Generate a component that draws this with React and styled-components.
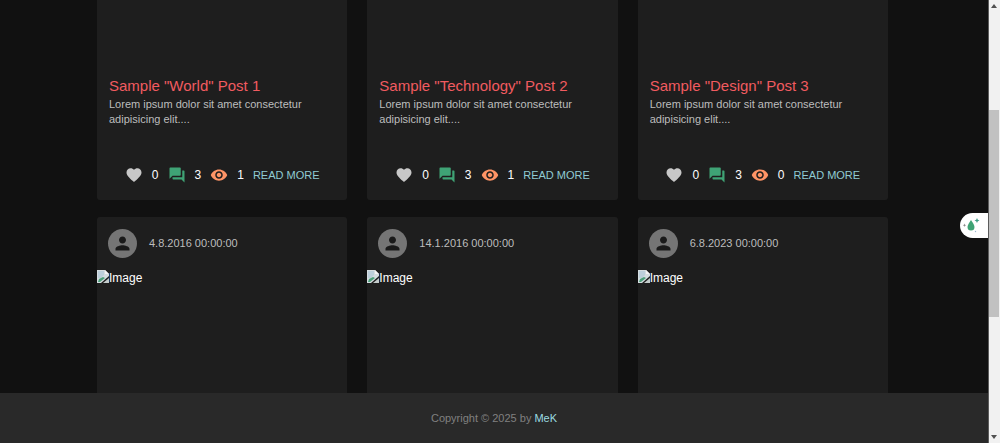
import React from "react";
import styled, { createGlobalStyle } from "styled-components";

const GlobalStyle = createGlobalStyle`
  *, *::before, *::after { box-sizing: border-box; }
  body {
    margin: 0;
    background: #111111;
    color: #ffffff;
    font-family: "Liberation Sans", Arial, sans-serif;
    font-size: 12px;
  }
  h2, p { margin: 0; font-weight: 400; }
`;

const Shell = styled.div`
  display: flex;
  min-height: 100vh;
`;

const Page = styled.div`
  flex: 1;
  min-width: 0;
  display: flex;
  flex-direction: column;
`;

const Posts = styled.main`
  flex: 1;
  display: grid;
  grid-template-columns: repeat(3, minmax(0, 1fr));
  grid-template-rows: auto 1fr;
  gap: 17px 20px;
  padding: 0 100px 0 97px;
`;

const Card = styled.article`
  display: flex;
  flex-direction: column;
  background: #1e1e1e;
  border-radius: ${(p) => (p.$open === "top" ? "0 0 3px 3px" : "3px 3px 0 0")};
`;

const Media = styled.div`
  height: ${(p) => p.$height}px;
`;

const CardBody = styled.div`
  padding: 0 12px;
  min-height: 75px;
`;

const Title = styled.h2`
  font-size: 15px;
  line-height: 22px;
  color: #f15b60;
`;

const Excerpt = styled.p`
  font-size: 11px;
  line-height: 15px;
  color: #bdbdbd;
`;

const Actions = styled.div`
  display: flex;
  align-items: center;
  justify-content: center;
  gap: 9px;
  height: 50px;
`;

const IconButton = styled.button`
  display: flex;
  padding: 0;
  border: 0;
  background: none;
  color: ${(p) => p.$color};
  cursor: pointer;
`;

const Icon = styled.svg`
  display: block;
  width: ${(p) => p.$size}px;
  height: ${(p) => p.$size}px;
  fill: currentColor;
`;

const ReadMore = styled.a`
  font-size: 11px;
  color: #90cbd3;
  text-decoration: none;
`;

const CardHeader = styled.header`
  display: flex;
  align-items: center;
  gap: 12px;
  height: 52px;
  padding: 0 11px;
`;

const Avatar = styled.span`
  display: flex;
  align-items: center;
  justify-content: center;
  width: 29px;
  height: 29px;
  border-radius: 50%;
  background: #757575;
  color: #1a1a1a;
`;

const PostDate = styled.time`
  font-size: 11px;
  color: #bdbdbd;
`;

const MissingImage = styled.div`
  display: flex;
  align-items: flex-start;
  height: ${(p) => p.$height}px;
  line-height: 18px;
`;

const BrokenIcon = styled.svg`
  display: block;
  width: 12px;
  height: 16px;
`;

const Footer = styled.footer`
  display: flex;
  align-items: center;
  justify-content: center;
  height: 50px;
  background: #292929;
  color: #808080;
  font-size: 11px;
`;

const FooterLink = styled.a`
  color: #9adbe0;
  text-decoration: none;
`;

const ScrollBar = styled.div`
  position: sticky;
  top: 0;
  display: flex;
  flex-direction: column;
  align-items: center;
  width: 12px;
  height: 100vh;
  background: #f1f1f1;
  border-left: 1px solid #5c5c5c;
`;

const ScrollArrow = styled.svg`
  display: block;
  flex: none;
  width: 11px;
  height: 12px;
  fill: #505050;
`;

const ScrollTrack = styled.div`
  flex: 1;
  width: 100%;
  display: grid;
  grid-template-rows: 98fr 207fr 114fr;
`;

const ScrollThumb = styled.div`
  grid-row: 2;
  margin-right: 1px;
  background: #c1c1c1;
`;

const DropletTab = styled.button`
  position: fixed;
  top: 213px;
  right: 12px;
  width: 28px;
  height: 25px;
  padding: 0;
  border: 0;
  border-radius: 13px 0 0 13px;
  background: #ffffff;
  cursor: pointer;
`;

const DropletArt = styled.svg`
  display: block;
  width: 28px;
  height: 25px;
`;

const paths = {
  heart:
    "m12 21.35-1.45-1.32C5.4 15.36 2 12.28 2 8.5 2 5.42 4.42 3 7.5 3c1.74 0 3.41.81 4.5 2.09C13.09 3.81 14.76 3 16.5 3 19.58 3 22 5.42 22 8.5c0 3.78-3.4 6.86-8.55 11.54L12 21.35z",
  forum:
    "M21 6h-2v9H6v2c0 .55.45 1 1 1h11l4 4V7c0-.55-.45-1-1-1zm-4 6V3c0-.55-.45-1-1-1H3c-.55 0-1 .45-1 1v14l4-4h10c.55 0 1-.45 1-1z",
  eye: "M12 4.5C7 4.5 2.73 7.61 1 12c1.73 4.39 6 7.5 11 7.5s9.27-3.11 11-7.5c-1.73-4.39-6-7.5-11-7.5zM12 17c-2.76 0-5-2.24-5-5s2.24-5 5-5 5 2.24 5 5-2.24 5-5 5zm0-8c-1.66 0-3 1.34-3 3s1.34 3 3 3 3-1.34 3-3-1.34-3-3-3z",
  person:
    "M12 12c2.21 0 4-1.79 4-4s-1.79-4-4-4-4 1.79-4 4 1.79 4 4 4zm0 2c-2.67 0-8 1.34-8 4v2h16v-2c0-2.66-5.33-4-8-4z",
};

function Glyph({ name, size = 18 }) {
  return (
    <Icon $size={size} viewBox="0 0 24 24" aria-hidden="true">
      <path d={paths[name]} />
    </Icon>
  );
}

const posts = [
  { title: 'Sample "World" Post 1', likes: 0, comments: 3, views: 1 },
  { title: 'Sample "Technology" Post 2', likes: 0, comments: 3, views: 1 },
  { title: 'Sample "Design" Post 3', likes: 0, comments: 3, views: 0 },
];

const dates = ["4.8.2016 00:00:00", "14.1.2016 00:00:00", "6.8.2023 00:00:00"];

function PostCard({ post }) {
  return (
    <Card $open="top">
      <Media $height={75} />
      <CardBody>
        <Title>{post.title}</Title>
        <Excerpt>Lorem ipsum dolor sit amet consectetur adipisicing elit....</Excerpt>
      </CardBody>
      <Actions>
        <IconButton $color="#c8c8c8" aria-label="Like">
          <Glyph name="heart" />
        </IconButton>
        <span>{post.likes}</span>
        <IconButton $color="#3fa375" aria-label="Comments">
          <Glyph name="forum" />
        </IconButton>
        <span>{post.comments}</span>
        <IconButton $color="#ff9466" aria-label="Views">
          <Glyph name="eye" />
        </IconButton>
        <span>{post.views}</span>
        <ReadMore href="#post">READ MORE</ReadMore>
      </Actions>
    </Card>
  );
}

function BrokenImage() {
  return (
    <BrokenIcon viewBox="0 0 12 16" aria-hidden="true">
      <path d="M0 1h8l4 4v2L4 14H0z" fill="#d5dde0" />
      <path d="M1 2h6v4l-3 3H1z" fill="#bccfdb" />
      <path d="M8 1v4h4z" fill="#f4f4f4" />
      <path d="M1 13l1-3 4-2 2 1-5 4z" fill="#4b9e79" />
      <path d="M12 9v5H6z" fill="#c4cccb" />
    </BrokenIcon>
  );
}

function PreviewCard({ date }) {
  return (
    <Card $open="bottom">
      <CardHeader>
        <Avatar>
          <Glyph name="person" size={21} />
        </Avatar>
        <PostDate>{date}</PostDate>
      </CardHeader>
      <MissingImage $height={124} role="img" aria-label="Image">
        <BrokenImage />
        <span>Image</span>
      </MissingImage>
    </Card>
  );
}

export default function App() {
  return (
    <>
      <GlobalStyle />
      <Shell>
        <Page>
          <Posts>
            {posts.map((post) => (
              <PostCard key={post.title} post={post} />
            ))}
            {dates.map((date) => (
              <PreviewCard key={date} date={date} />
            ))}
          </Posts>
          <Footer>
            <span>
              Copyright © 2025 by <FooterLink href="#author">MeK</FooterLink>
            </span>
          </Footer>
        </Page>
        <ScrollBar aria-hidden="true">
          <ScrollArrow viewBox="0 0 11 12">
            <path d="M5 4l3 4H2z" />
          </ScrollArrow>
          <ScrollTrack>
            <ScrollThumb />
          </ScrollTrack>
          <ScrollArrow viewBox="0 0 11 12">
            <path d="M2 4h6L5 8z" />
          </ScrollArrow>
        </ScrollBar>
      </Shell>
      <DropletTab aria-label="Color picker">
        <DropletArt viewBox="0 0 28 25" aria-hidden="true">
          <path d="M11 7c1 2 3.500 4.500 3.500 7a3.500 3.500 0 0 1-7 0c0-2.500 2.500-5 3.500-7z" fill="#3fa375" />
          <path d="M17 5l.8 1.700 1.700.8-1.700.8-.8 1.700-.8-1.700-1.700-.8 1.700-.8z" fill="#3f9c85" />
          <path d="M4.500 10.500l.5 1.200 1.200.5-1.200.5-.5 1.200-.5-1.200-1.200-.5 1.200-.5z" fill="#888888" />
          <circle cx="15.500" cy="18.500" r="0.700" fill="#9bb8cf" />
        </DropletArt>
      </DropletTab>
    </>
  );
}
